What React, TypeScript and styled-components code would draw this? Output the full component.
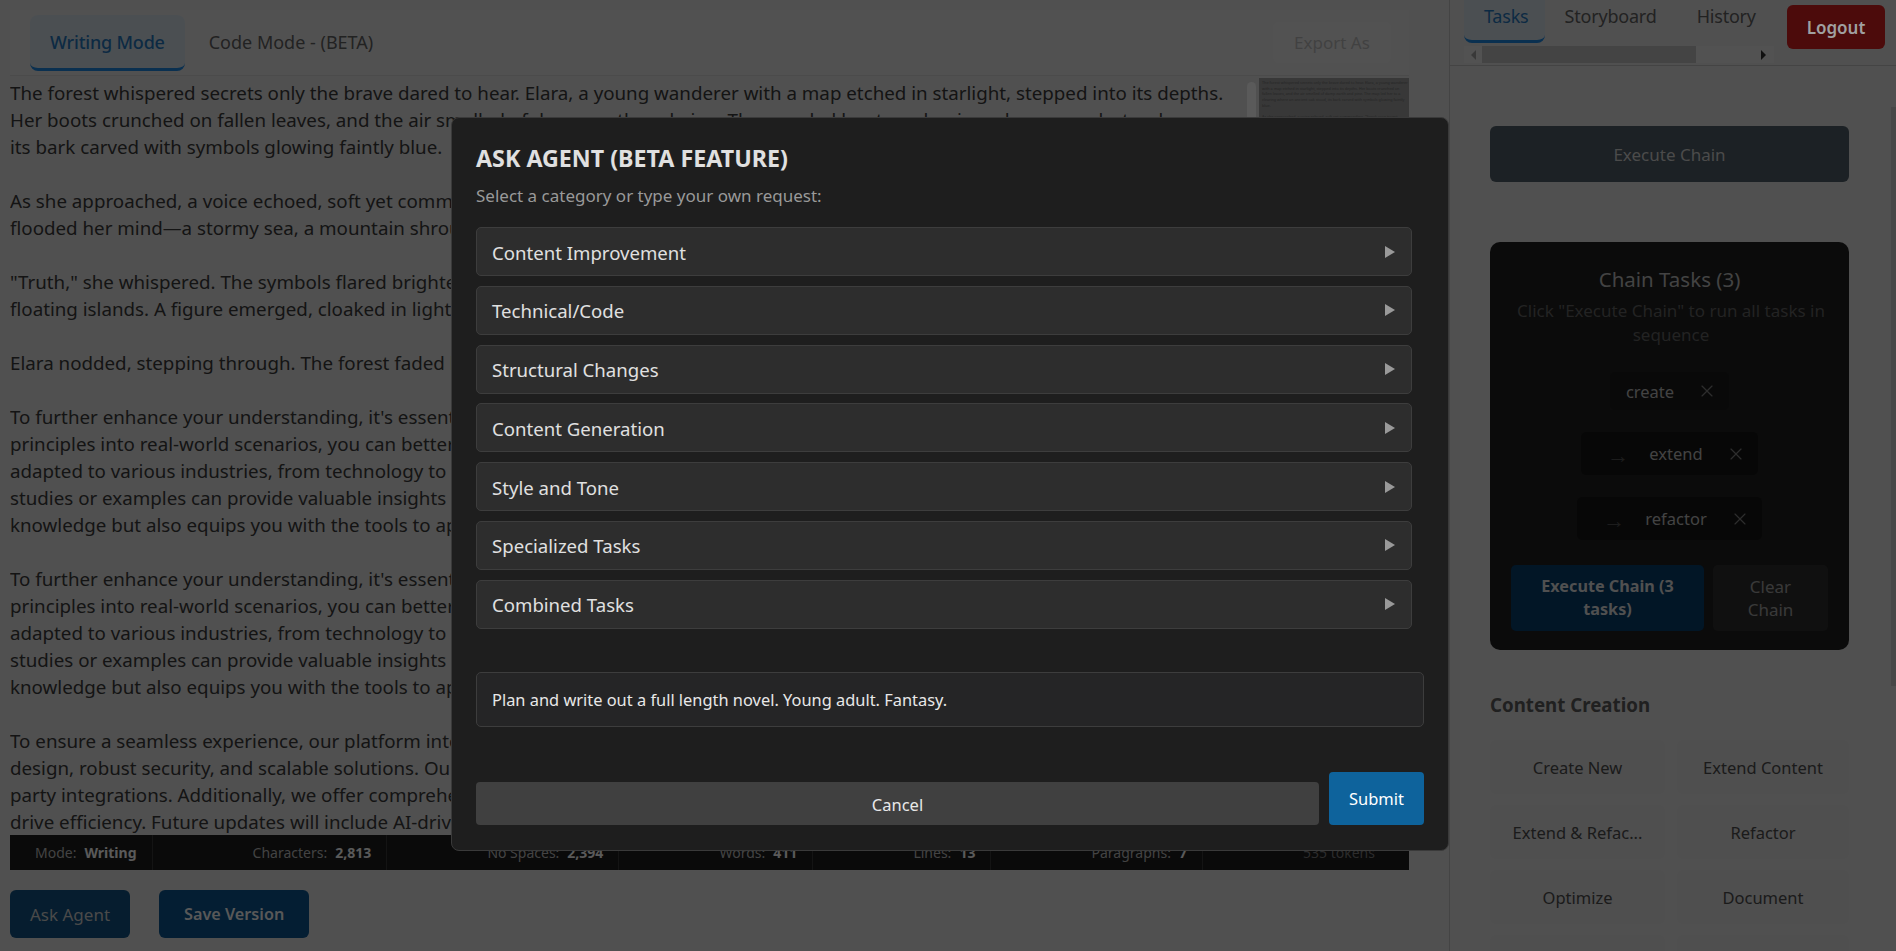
import * as React from 'react';
import styled, { createGlobalStyle } from 'styled-components';
import { X } from 'lucide-react';

const GlobalStyle = createGlobalStyle`
  html, body, #root {
    margin: 0;
    height: 100%;
  }
  body {
    background: #c8c8c8;
    overflow: hidden;
    font-family: "Noto Sans", "Open Sans", "Liberation Sans", sans-serif;
    font-size: 17px;
    color: #333;
  }
  * { box-sizing: border-box; }
`;

const Page = styled.div`
  display: flex;
  width: 100%;
  height: 951px;
  overflow: hidden;
  background: #c8c8c8;
`;

/* left side: editor */
const EditorPane = styled.div`
  flex: 0 0 1449px;
  display: flex;
  flex-direction: column;
  padding: 10px 40px 0 10px;
`;

const ModeBar = styled.div`
  flex: 0 0 66px;
  display: flex;
  justify-content: space-between;
  align-items: flex-start;
  padding: 5px 18px 0 20px;
  background: #cbcbcb;
  border-bottom: 1px solid #bcbcbc;
`;

const ModeTabs = styled.div`
  display: flex;
  gap: 4px;
`;

const ModeTab = styled.div<{ $active?: boolean }>`
  height: 56px;
  padding: 0 20px;
  display: flex;
  align-items: center;
  font-size: 18px;
  border-radius: 8px;
  letter-spacing: ${p => (p.$active ? '-0.2px' : '0')};
  color: ${p => (p.$active ? '#1f6aa8' : '#555')};
  background: ${p => (p.$active ? '#bcc6cd' : 'transparent')};
  border-bottom: 3px solid ${p => (p.$active ? '#1a78c8' : 'transparent')};
  font-weight: ${p => (p.$active ? 500 : 400)};
`;

const ExportButton = styled.div`
  margin-top: 7px;
  width: 118px;
  height: 41px;
  display: flex;
  align-items: center;
  justify-content: center;
  border-radius: 6px;
  background: #cdcdcd;
  color: #a4a4a4;
  font-size: 17px;
`;

const DocArea = styled.div`
  flex: 0 0 757px;
  display: flex;
  margin-top: 2px;
  overflow: hidden;
`;

const DocText = styled.div`
  flex: 0 0 1237px;
  padding-top: 1px;
  overflow: hidden;
`;

const DocLine = styled.div`
  height: 27px;
  line-height: 27px;
  font-size: 18.75px;
  white-space: nowrap;
  color: #333;
`;

const DocScroll = styled.div`
  flex: 0 0 12px;
  padding: 4px 3px 0 0;
`;

const DocThumb = styled.div`
  width: 9px;
  height: 300px;
  border-radius: 5px;
  background: #e0e0e0;
`;

const Minimap = styled.div`
  flex: 0 0 150px;
  padding: 2px 3px;
  background: #8c8c8c;
  overflow: hidden;
`;

const MiniLine = styled.div`
  height: 5.7px;
  line-height: 5.7px;
  font-size: 3.75px;
  white-space: nowrap;
  color: #5c5c5c;
`;

const StatsBar = styled.div`
  flex: 0 0 35px;
  display: flex;
  align-items: center;
  justify-content: space-between;
  padding: 0 34px 0 25px;
  background: #191919;
  font-size: 14px;
  color: #a8a8a8;
`;

const Stat = styled.div<{ $plain?: boolean }>`
  height: 100%;
  display: flex;
  align-items: center;
  gap: 8px;
  padding-right: ${p => (p.$plain ? 0 : 15)}px;
  border-right: ${p => (p.$plain ? 'none' : '1px solid #343434')};
  color: ${p => (p.$plain ? '#6e6e6e' : 'inherit')};
`;

const StatValue = styled.b`
  color: #e0e0e0;
  font-weight: 700;
`;

const DocActions = styled.div`
  display: flex;
  gap: 29px;
  margin-top: 20px;
`;

const DocButton = styled.div<{ $strong?: boolean }>`
  height: 48px;
  padding: 0 ${p => (p.$strong ? 25 : 20)}px;
  display: flex;
  align-items: center;
  border-radius: 6px;
  font-size: ${p => (p.$strong ? 16.2 : 17)}px;
  color: ${p => (p.$strong ? '#ddd' : '#b8b8b8')};
  background: ${p => (p.$strong ? '#0a4c80' : '#0f4a75')};
  font-weight: ${p => (p.$strong ? 600 : 400)};
`;

/* right side: task panel */
const TaskPane = styled.div`
  position: relative;
  flex: 1;
  display: flex;
  flex-direction: column;
  border-left: 1px solid #aaa;
  overflow: hidden;
`;

const TaskHeader = styled.div`
  flex: 0 0 66px;
  display: flex;
  justify-content: space-between;
  padding: 0 11px 0 14px;
  border-bottom: 1px solid #aaa;
`;

const TabStrip = styled.div`
  width: 310px;
  display: flex;
  flex-direction: column;
`;

const TabRow = styled.div`
  height: 46px;
  display: flex;
`;

const TaskTab = styled.div<{ $active?: boolean }>`
  height: 43px;
  padding: 0 ${p => (p.$active ? 16 : 20)}px 8px 20px;
  display: flex;
  align-items: center;
  font-size: 18px;
  letter-spacing: -0.2px;
  border-radius: 0 0 8px 8px;
  color: ${p => (p.$active ? '#1f6aa8' : '#555')};
  background: ${p => (p.$active ? '#bcc6cd' : 'transparent')};
  border-bottom: 3px solid ${p => (p.$active ? '#1a78c8' : 'transparent')};
`;

const HScroll = styled.div`
  height: 17px;
  display: flex;
  align-items: center;
  background: #cdcdcd;
`;

const ArrowLeft = styled.i`
  margin: 0 6px 0 7px;
  border: 5px solid transparent;
  border-left: 0;
  border-right: 5px solid #909090;
`;

const HThumb = styled.div`
  width: 214px;
  height: 17px;
  background: #aaa;
`;

const ArrowRight = styled.i`
  margin-left: 65px;
  border: 5px solid transparent;
  border-right: 0;
  border-left: 5px solid #2a2a2a;
`;

const LogoutButton = styled.div`
  position: relative;
  z-index: 11;
  width: 98px;
  height: 44px;
  margin-top: 5px;
  display: flex;
  align-items: center;
  justify-content: center;
  border-radius: 6px;
  background: #4c0b0b;
  color: #a0a0a0;
  font-size: 17px;
  font-weight: 600;
`;

const TaskBody = styled.div`
  flex: 1;
  padding: 60px 47px 0 40px;
  overflow: hidden;
`;

const VScroll = styled.div`
  position: absolute;
  top: 107px;
  right: 0;
  width: 5px;
  height: 579px;
  background: #b2b2b2;
`;

const RunButton = styled.div`
  height: 56px;
  display: flex;
  align-items: center;
  justify-content: center;
  border-radius: 6px;
  background: #47535c;
  color: #bbb;
  font-size: 17px;
`;

const ChainPanel = styled.div`
  height: 408px;
  margin-top: 60px;
  padding: 20px 21px 21px;
  border-radius: 10px;
  background: #1c1c1c;
  text-align: center;
`;

const ChainTitle = styled.div`
  height: 34px;
  line-height: 34px;
  font-size: 20.5px;
  color: #a8a8a8;
`;

const ChainHint = styled.div`
  margin: 3px auto 0;
  width: 320px;
  line-height: 24px;
  font-size: 17px;
  color: #585858;
`;

const ChipList = styled.div`
  margin-top: 25px;
  display: flex;
  flex-direction: column;
  align-items: center;
  gap: 22px;
`;

const Chip = styled.div<{ $chained?: boolean }>`
  height: ${p => (p.$chained ? 43 : 38)}px;
  display: flex;
  align-items: center;
  padding: 0 17px 0 ${p => (p.$chained ? 26 : 16)}px;
  border-radius: 5px;
  background: ${p => (p.$chained ? '#131313' : '#181818')};
  font-size: 16.5px;
  color: #a8a8a8;
`;

const ChipArrow = styled.span`
  width: 16px;
  margin-right: 26px;
  font-size: 22px;
  line-height: 1;
  color: #484848;
`;

const ChipClose = styled.span`
  width: 10px;
  height: 20px;
  margin-left: 28px;
  display: flex;
  justify-content: center;
  color: #707070;
`;

const ChainActions = styled.div`
  margin-top: 25px;
  display: grid;
  grid-template-columns: 193px 115px;
  gap: 9px;
`;

const ChainButton = styled.div<{ $primary?: boolean }>`
  height: 66px;
  padding: 0 16px;
  display: flex;
  align-items: center;
  justify-content: center;
  border-radius: 5px;
  line-height: 23px;
  font-size: ${p => (p.$primary ? 16.2 : 17)}px;
  background: ${p => (p.$primary ? '#053760' : '#2a2a2a')};
  color: ${p => (p.$primary ? '#c8c8c8' : '#909090')};
  font-weight: ${p => (p.$primary ? 700 : 400)};
`;

const GroupHeading = styled.div`
  margin-top: 41px;
  height: 27px;
  line-height: 27px;
  font-size: 18.7px;
  font-weight: 700;
  color: #505050;
`;

const TaskGrid = styled.div`
  margin-top: 22px;
  display: grid;
  grid-template-columns: 175px 172px;
  grid-auto-rows: 54px;
  gap: 11px 12px;
`;

const TaskButton = styled.div`
  padding-top: 1px;
  display: flex;
  align-items: center;
  justify-content: center;
  border-radius: 6px;
  background: #c5c5c5;
  color: #444;
  font-size: 16.5px;
`;

/* modal */
const Overlay = styled.div`
  position: fixed;
  inset: 0;
  z-index: 10;
  display: flex;
  justify-content: center;
  align-items: flex-start;
  padding: 117px 0 0 4px;
  background: rgba(0, 0, 0, 0.6);
`;

const Modal = styled.div`
  width: 998px;
  height: 734px;
  padding: 24px;
  border: 1px solid #3a3a3a;
  border-radius: 8px;
  background: #1e1e1e;
  color: #e0e0e0;
`;

const ModalTitle = styled.div`
  margin-top: -1px;
  height: 34px;
  line-height: 34px;
  font-size: 23.25px;
  font-weight: 700;
`;

const ModalHint = styled.div`
  margin-top: 8px;
  height: 26px;
  line-height: 26px;
  font-size: 17px;
  color: #999;
`;

const CategoryList = styled.div`
  margin-top: 18px;
  padding-right: 12px;
  display: flex;
  flex-direction: column;
  gap: 9.8px;
`;

const Category = styled.div`
  height: 49px;
  padding: 1px 16px 0 15px;
  display: flex;
  align-items: center;
  justify-content: space-between;
  border: 1px solid #3d3d3d;
  border-radius: 5px;
  background: #2d2d2d;
  font-size: 18.6px;
`;

const Caret = styled.i`
  margin-top: -1px;
  border: 6px solid transparent;
  border-right: 0;
  border-left: 10px solid #999;
`;

const RequestInput = styled.input`
  display: block;
  width: 100%;
  height: 55px;
  margin-top: 43px;
  padding: 0 15px;
  border: 1px solid #3d3d3d;
  border-radius: 5px;
  background: #252526;
  color: #e8e8e8;
  font: inherit;
  font-size: 16.4px;
  outline: none;
`;

const ModalActions = styled.div`
  margin-top: 45px;
  display: flex;
  align-items: flex-end;
  gap: 10px;
`;

const CancelButton = styled.div`
  flex: 1;
  height: 43px;
  padding-top: 2px;
  display: flex;
  align-items: center;
  justify-content: center;
  border-radius: 4px;
  background: #404040;
  color: #e8e8e8;
  font-size: 16.5px;
`;

const SubmitButton = styled.div`
  flex: 0 0 95px;
  height: 53px;
  display: flex;
  align-items: center;
  justify-content: center;
  border-radius: 4px;
  background: #0e639c;
  color: #fff;
  font-size: 16.5px;
`;

const enhance = [
  "To further enhance your understanding, it's essential to explore how these concepts connect with one another. By applying these",
  'principles into real-world scenarios, you can better appreciate their practical value. These ideas have been successfully',
  'adapted to various industries, from technology to healthcare and education, showing remarkable flexibility. Reviewing case',
  'studies or examples can provide valuable insights into what works best. This approach not only deepens your',
  'knowledge but also equips you with the tools to apply it effectively in your own projects and future work.',
];

const docLines = [
  'The forest whispered secrets only the brave dared to hear. Elara, a young wanderer with a map etched in starlight, stepped into its depths.',
  'Her boots crunched on fallen leaves, and the air smelled of damp earth and pine. The map led her to a clearing where an oak stood,',
  'its bark carved with symbols glowing faintly blue.',
  '',
  'As she approached, a voice echoed, soft yet commanding. "Speak your truest desire, and the way will open." Visions',
  'flooded her mind—a stormy sea, a mountain shrouded in mist, a city of glass and gold rising from the sand.',
  '',
  '"Truth," she whispered. The symbols flared brighter, and the oak split apart, revealing a path of light toward',
  'floating islands. A figure emerged, cloaked in light, and held out a hand in silent welcome to the wanderer.',
  '',
  'Elara nodded, stepping through. The forest faded behind her, and a new world began.',
  '',
  ...enhance,
  '',
  ...enhance,
  '',
  'To ensure a seamless experience, our platform integrates the latest technology with an intuitive',
  'design, robust security, and scalable solutions. Our team provides support for customization and third-',
  'party integrations. Additionally, we offer comprehensive analytics and reporting tools that',
  'drive efficiency. Future updates will include AI-driven automation and enhanced collaboration.',
];

const miniLines = [
  'The forest whispered secrets only the brave dared to hear. Elara, a young wanderer',
  'with a map etched in starlight, stepped into its depths. Her boots crunched on',
  'fallen leaves, and the air smelled of damp earth and pine. The map led her to a',
  'clearing where an ancient oak stood, its bark carved with symbols glowing faintly',
  'blue.',
  '',
  'As she approached, a voice echoed, soft yet commanding. "Speak your truest',
];

const stats: Array<[string, string]> = [
  ['Mode:', 'Writing'],
  ['Characters:', '2,813'],
  ['No Spaces:', '2,394'],
  ['Words:', '411'],
  ['Lines:', '13'],
  ['Paragraphs:', '7'],
];

const categories = [
  'Content Improvement',
  'Technical/Code',
  'Structural Changes',
  'Content Generation',
  'Style and Tone',
  'Specialized Tasks',
  'Combined Tasks',
];

// the fourth row sits under the fold, only the top of its buttons shows
const tasks = ['Create New', 'Extend Content', 'Extend & Refac...', 'Refactor', 'Optimize', 'Document', '', ''];

const CloseIcon = () => (
  <ChipClose>
    <X size={20} strokeWidth={1.4} style={{ flex: 'none' }} />
  </ChipClose>
);

const App = () => (
  <Page>
    <GlobalStyle />
    <EditorPane>
      <ModeBar>
        <ModeTabs>
          <ModeTab $active>Writing Mode</ModeTab>
          <ModeTab>Code Mode - (BETA)</ModeTab>
        </ModeTabs>
        <ExportButton>Export As</ExportButton>
      </ModeBar>
      <DocArea>
        <DocText>
          {docLines.map((line, i) => (
            <DocLine key={i}>{line}</DocLine>
          ))}
        </DocText>
        <DocScroll>
          <DocThumb />
        </DocScroll>
        <Minimap>
          {miniLines.map((line, i) => (
            <MiniLine key={i}>{line}</MiniLine>
          ))}
        </Minimap>
      </DocArea>
      <StatsBar>
        {stats.map(([label, value]) => (
          <Stat key={label}>
            {label} <StatValue>{value}</StatValue>
          </Stat>
        ))}
        <Stat $plain>535 tokens</Stat>
      </StatsBar>
      <DocActions>
        <DocButton>Ask Agent</DocButton>
        <DocButton $strong>Save Version</DocButton>
      </DocActions>
    </EditorPane>

    <TaskPane>
      <TaskHeader>
        <TabStrip>
          <TabRow>
            <TaskTab $active>Tasks</TaskTab>
            <TaskTab>Storyboard</TaskTab>
            <TaskTab>History</TaskTab>
          </TabRow>
          <HScroll>
            <ArrowLeft />
            <HThumb />
            <ArrowRight />
          </HScroll>
        </TabStrip>
        <LogoutButton>Logout</LogoutButton>
      </TaskHeader>
      <TaskBody>
        <RunButton>Execute Chain</RunButton>
        <ChainPanel>
          <ChainTitle>Chain Tasks (3)</ChainTitle>
          <ChainHint>Click "Execute Chain" to run all tasks in sequence</ChainHint>
          <ChipList>
            <Chip>
              create
              <CloseIcon />
            </Chip>
            <Chip $chained>
              <ChipArrow>→</ChipArrow>extend
              <CloseIcon />
            </Chip>
            <Chip $chained>
              <ChipArrow>→</ChipArrow>refactor
              <CloseIcon />
            </Chip>
          </ChipList>
          <ChainActions>
            <ChainButton $primary>Execute Chain (3 tasks)</ChainButton>
            <ChainButton>Clear Chain</ChainButton>
          </ChainActions>
        </ChainPanel>
        <GroupHeading>Content Creation</GroupHeading>
        <TaskGrid>
          {tasks.map((task, i) => (
            <TaskButton key={i}>{task}</TaskButton>
          ))}
        </TaskGrid>
      </TaskBody>
      <VScroll />
    </TaskPane>

    <Overlay>
      <Modal>
        <ModalTitle>ASK AGENT (BETA FEATURE)</ModalTitle>
        <ModalHint>Select a category or type your own request:</ModalHint>
        <CategoryList>
          {categories.map(name => (
            <Category key={name}>
              {name}
              <Caret />
            </Category>
          ))}
        </CategoryList>
        <RequestInput readOnly value="Plan and write out a full length novel. Young adult. Fantasy." />
        <ModalActions>
          <CancelButton>Cancel</CancelButton>
          <SubmitButton>Submit</SubmitButton>
        </ModalActions>
      </Modal>
    </Overlay>
  </Page>
);

export default App;
